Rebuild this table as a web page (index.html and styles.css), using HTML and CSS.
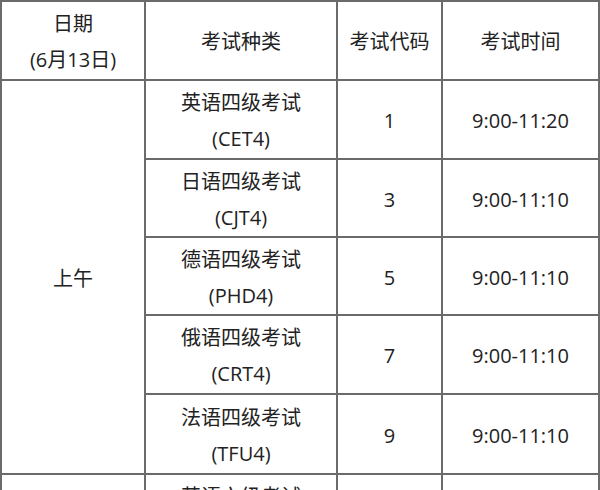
FILE: index.html
```html
<!DOCTYPE html>
<html lang="zh-CN">
<head>
<meta charset="utf-8">
<title>考试安排</title>
<link rel="stylesheet" href="styles.css">
</head>
<body>
<table class="schedule">
  <colgroup>
    <col class="c-date">
    <col class="c-type">
    <col class="c-code">
    <col class="c-time">
  </colgroup>
  <thead>
    <tr>
      <th>日期<br>(6月13日)</th>
      <th>考试种类</th>
      <th>考试代码</th>
      <th>考试时间</th>
    </tr>
  </thead>
  <tbody>
    <tr>
      <td rowspan="5">上午</td>
      <td>英语四级考试<br>(CET4)</td>
      <td>1</td>
      <td>9:00-11:20</td>
    </tr>
    <tr class="r-short">
      <td>日语四级考试<br>(CJT4)</td>
      <td>3</td>
      <td>9:00-11:10</td>
    </tr>
    <tr class="r-short">
      <td>德语四级考试<br>(PHD4)</td>
      <td>5</td>
      <td>9:00-11:10</td>
    </tr>
    <tr>
      <td>俄语四级考试<br>(CRT4)</td>
      <td>7</td>
      <td>9:00-11:10</td>
    </tr>
    <tr class="r-tall">
      <td>法语四级考试<br>(TFU4)</td>
      <td>9</td>
      <td>9:00-11:10</td>
    </tr>
    <tr class="r-tall">
      <td></td>
      <td class="top">英语六级考试</td>
      <td></td>
      <td></td>
    </tr>
  </tbody>
</table>
</body>
</html>
```
FILE: styles.css
```css
html, body {
  margin: 0;
  padding: 0;
  background: #ffffff;
  overflow: hidden;
}

body {
  width: 600px;
  height: 490px;
  font-family: "Open Sans", "Noto Sans CJK SC", sans-serif;
  font-size: 20px;
  color: #222222;
}

.schedule {
  border-collapse: collapse;
  table-layout: fixed;
  width: 598px;
}

.c-date { width: 144px; }
.c-type { width: 192px; }
.c-code { width: 105px; }
.c-time { width: 157px; }

.schedule th,
.schedule td {
  border: 2px solid #6a6a6a;
  height: 79px;
  padding: 3px 0 0 0;
  box-sizing: border-box;
  text-align: center;
  vertical-align: middle;
  font-weight: normal;
  line-height: 36px;
  white-space: nowrap;
}

.schedule .r-short td {
  height: 78px;
}

.schedule .r-tall td {
  height: 80px;
}

.schedule td.top {
  vertical-align: top;
  padding-top: 4px;
}
```
